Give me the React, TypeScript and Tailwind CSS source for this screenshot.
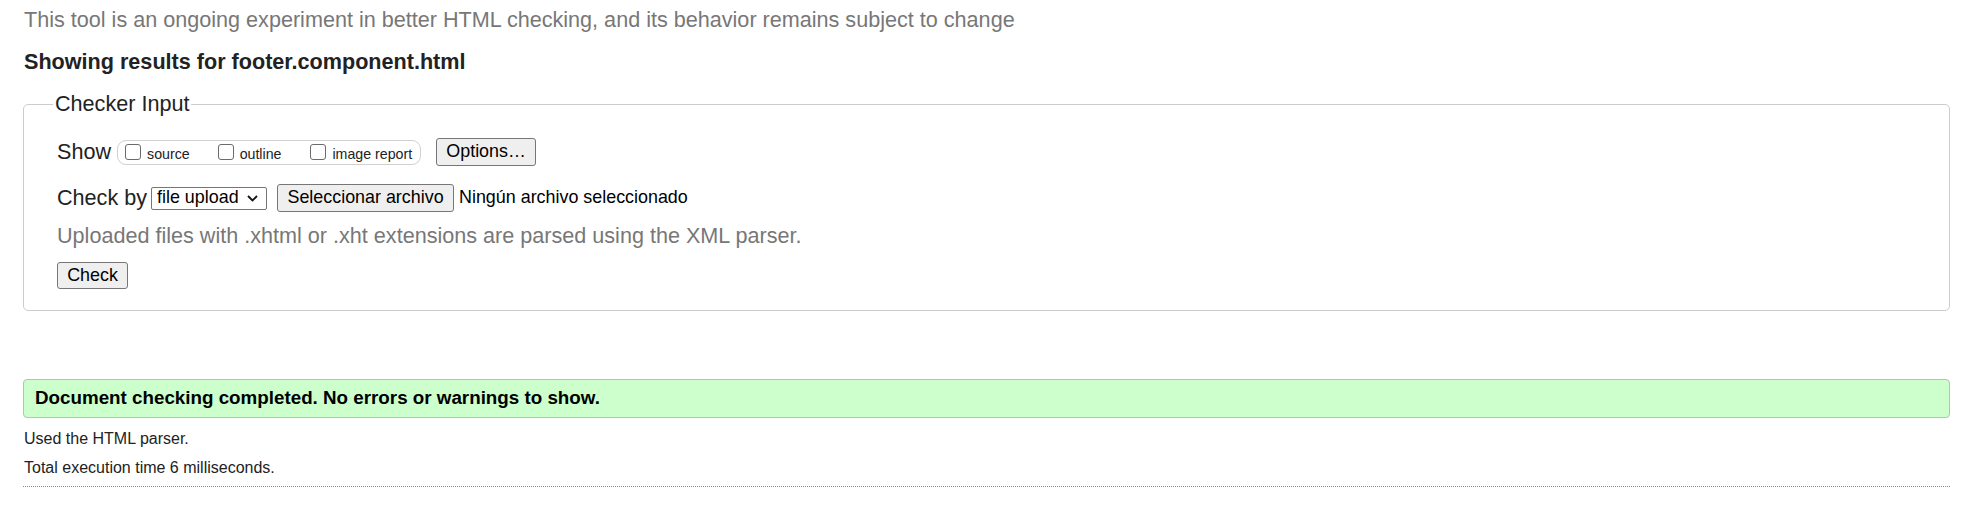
type OptionProps = {
  label: string
  gap?: string
}

const CheckOption = ({ label, gap = 'ml-0' }: OptionProps) => {
  return (
    <label className={`flex items-center ${gap}`}>
      <span className="inline-block w-[16px] h-[16px] border border-[#6b6b6b] rounded-[3px] bg-white" />
      <span className="ml-[6px] text-[14.2px] leading-[16px] text-[#222] mt-[3px]">{label}</span>
    </label>
  )
}

const Button = ({ label, width, height = 'h-[28px]' }: { label: string; width: string; height?: string }) => {
  return (
    <button
      className={`${width} ${height} flex items-center justify-center bg-[#efefef] border border-[#767676] rounded-[3px] text-[17.9px] leading-none text-black`}
    >
      {label}
    </button>
  )
}

const App = () => {
  return (
    <div className="w-full h-[512px] bg-white font-['Liberation_Sans',Arial,sans-serif] text-[#222] pl-[23px] pr-[13px] overflow-hidden">
      <p className="mt-[8px] pl-[1px] text-[21.6px] leading-[24px] text-[#777]">
        This tool is an ongoing experiment in better HTML checking, and its behavior remains subject to change
      </p>
      <h2 className="mt-[18px] pl-[1px] text-[21.6px] leading-[24px] font-bold text-[#222]">
        Showing results for footer.component.html
      </h2>

      <fieldset className="mt-[18px] border border-[#cccccc] rounded-[5px] pl-[33px] pr-[20px] pb-[21px]">
        <legend className="ml-[-4px] px-[2px] text-[21.6px] leading-[24px] text-[#222]">Checker Input</legend>

        <div className="mt-[22px] h-[28px] flex items-center">
          <span className="text-[21.6px] leading-[24px]">Show</span>
          <div className="ml-[6px] h-[25px] flex items-center border border-[#d0d0d0] rounded-[9px] pl-[7px] pr-[8px]">
            <CheckOption label="source" />
            <CheckOption label="outline" gap="ml-[28px]" />
            <CheckOption label="image report" gap="ml-[29px]" />
          </div>
          <div className="ml-[15px]">
            <Button label="Options…" width="w-[100px]" />
          </div>
        </div>

        <div className="mt-[18px] h-[28px] flex items-center">
          <span className="text-[21.6px] leading-[24px]">Check by</span>
          <div className="ml-[4px] w-[116px] h-[23px] flex items-center justify-between border border-[#767676] rounded-[2px] bg-white pl-[5px] pr-[8px]">
            <span className="text-[17.9px] leading-none text-black">file upload</span>
            <svg width="11" height="7" viewBox="0 0 11 7" fill="none">
              <polyline points="1,1 5.5,5.5 10,1" stroke="#111" strokeWidth="1.8" />
            </svg>
          </div>
          <div className="ml-[10px]">
            <Button label="Seleccionar archivo" width="w-[177px]" />
          </div>
          <span className="ml-[5px] text-[17.9px] leading-none text-black">Ningún archivo seleccionado</span>
        </div>

        <p className="mt-[12px] text-[21.6px] leading-[24px] text-[#777]">
          Uploaded files with .xhtml or .xht extensions are parsed using the XML parser.
        </p>

        <div className="mt-[14px]">
          <Button label="Check" width="w-[71px]" height="h-[27px]" />
        </div>
      </fieldset>

      <div className="mt-[68px] h-[39px] flex items-center bg-[#ccffcc] border border-[#bdbdbd] rounded-[4px] pl-[11px]">
        <span className="text-[18.8px] leading-none font-bold text-black">
          Document checking completed. No errors or warnings to show.
        </span>
      </div>

      <p className="mt-[11px] pl-[1px] text-[16px] leading-[20px] text-[#222]">Used the HTML parser.</p>
      <p className="mt-[9px] pl-[1px] text-[16px] leading-[20px] text-[#222]">Total execution time 6 milliseconds.</p>
      <div className="mt-[8px] border-t border-dotted border-[#888]" />
    </div>
  )
}

export default App
